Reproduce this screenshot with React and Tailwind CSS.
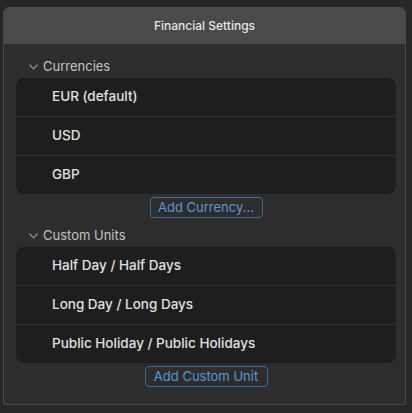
import React from "react";

function Chevron() {
  return (
    <svg width="9" height="6" viewBox="0 0 9 6" className="shrink-0">
      <path d="M0.8 1 L4.5 4.8 L8.2 1" fill="none" stroke="#9a9a9a" strokeWidth="1.1" strokeLinecap="round" strokeLinejoin="round" />
    </svg>
  );
}

function Section({ title, items, button, btnW, mt }) {
  return (
    <div className={`flex flex-col ${mt}`}>
      <div className="h-[20px] flex items-center pl-[13px] gap-[5px] pt-[3px]">
        <Chevron />
        <span className="text-[13px] text-[#c4c4c4]">{title}</span>
      </div>
      <div className="mt-[3px] bg-[#1e1e1e] rounded-[8px] flex flex-col overflow-hidden">
        {items.map((it, i) => (
          <div
            key={it}
            className={`h-[38px] flex items-center pl-[36px] pb-[1px] text-[13.5px] font-medium text-[#e0e0e0] ${i > 0 ? "border-t border-[#333333] h-[39px]" : ""}`}
          >
            {it}
          </div>
        ))}
      </div>
      <div className="mt-[3px] flex justify-center">
        <button className={`${btnW} h-[21px] border border-[#3f6a99] rounded-[4px] text-[13px] text-[#5b97d3] flex items-center justify-center leading-none`}>
          {button}
        </button>
      </div>
    </div>
  );
}

export default function App() {
  return (
    <div className="w-[412px] h-[413px] bg-[#272727] pt-[7px] pl-[3px] pr-[6px] pb-[8px]" style={{ fontFamily: "Inter, 'Liberation Sans', sans-serif" }}>
      <div className="h-full border border-[#4a4a4a] rounded-t-[6px] rounded-b-[2px] bg-[#2d2d2d] flex flex-col overflow-hidden">
        <div className="h-[36px] bg-[#4a4a4a] flex items-center justify-center text-[12px] font-medium text-[#e6e6e6] shrink-0">
          Financial Settings
        </div>
        <div className="pl-[12px] pr-[9px] flex flex-col">
          <Section
            title="Currencies"
            items={["EUR (default)", "USD", "GBP"]}
            button="Add Currency..."
            btnW="w-[113px]"
            mt="mt-[11px]"
          />
          <Section
            title="Custom Units"
            items={["Half Day / Half Days", "Long Day / Long Days", "Public Holiday / Public Holidays"]}
            button="Add Custom Unit"
            btnW="w-[123px]"
            mt="mt-[6px]"
          />
        </div>
      </div>
    </div>
  );
}
